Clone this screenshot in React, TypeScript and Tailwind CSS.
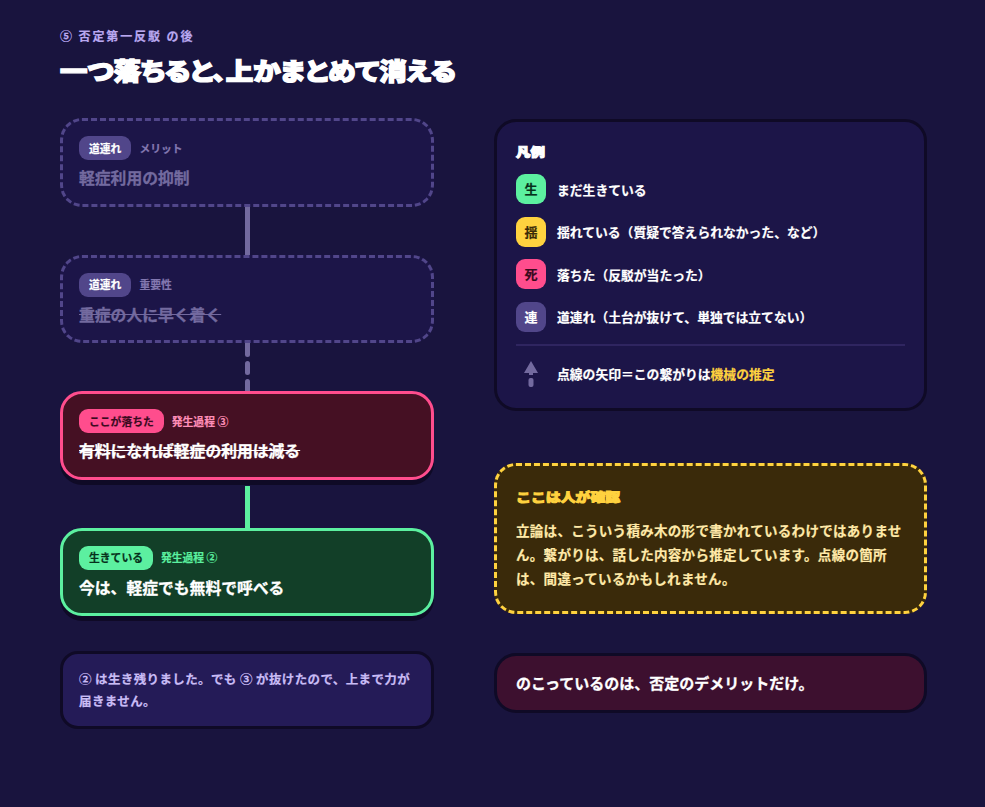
const font = "font-['Noto_Sans_CJK_JP','Noto_Sans',sans-serif]"

function Chip({ label, cls }: { label: string; cls: string }) {
  return (
    <span className={`inline-flex h-6 items-center rounded-[9px] px-[10px] text-[10.8px] font-bold [-webkit-text-stroke:0.2px] ${cls}`}>
      {label}
    </span>
  )
}

function Node({ box, chip, chipCls, sub, subCls, title, titleCls }: {
  box: string
  chip: string
  chipCls: string
  sub: string
  subCls: string
  title: string
  titleCls: string
}) {
  return (
    <div className={`h-[88.5px] rounded-[22px] px-4 pt-[15px] ${box}`}>
      <div className="flex items-center gap-2">
        <Chip label={chip} cls={chipCls} />
        <span className={`text-[10.8px] font-bold [-webkit-text-stroke:0.2px] ${subCls}`}>{sub}</span>
      </div>
      <div className={`mt-[6px] text-[15.8px] font-bold leading-[24px] [-webkit-text-stroke:0.3px] ${titleCls}`}>{title}</div>
    </div>
  )
}

function Link({ cls, dashed }: { cls: string; dashed?: boolean }) {
  if (dashed) {
    return (
      <div className="flex h-12 flex-col items-center justify-between">
        <div className="h-[14px] w-[5px] rounded-b-sm bg-[#736a9f]" />
        <div className="h-[14px] w-[5px] rounded-sm bg-[#736a9f]" />
        <div className="h-[12px] w-[5px] rounded-t-sm bg-[#736a9f]" />
      </div>
    )
  }
  return <div className={`mx-auto w-[5px] ${cls}`} />
}

function LegendRow({ mark, markCls, text }: { mark: string; markCls: string; text: string }) {
  return (
    <div className="flex items-center gap-[11px]">
      <span className={`flex h-[30px] w-[30px] items-center justify-center rounded-[9px] text-[13px] font-bold [-webkit-text-stroke:0.2px] ${markCls}`}>{mark}</span>
      <span className="pt-px text-[12.8px] font-bold text-white [-webkit-text-stroke:0.2px]">{text}</span>
    </div>
  )
}

export default function App() {
  return (
    <div className={`min-h-[807px] overflow-hidden bg-[#19143e] pl-[60px] pr-[58px] pt-[28px] ${font}`}>
      <div className="text-[12px] font-bold leading-4 tracking-[1.9px] text-[#b9a8f0] [-webkit-text-stroke:0.2px]">⑤ 否定第一反駁 の後</div>
      <h1 className="mt-[8px] w-max origin-left scale-x-[1.145] text-[24px] font-black leading-9 text-white [-webkit-text-stroke:1.4px_#fff] [font-feature-settings:'palt']">
        一つ落ちると、上かまとめて消える
      </h1>

      <div className="mt-[30px] grid grid-cols-[374px_433px] gap-x-[60px]">
        <div>
          <Node
            box="border-[3px] border-dashed border-[#51468a] bg-[#1c1548]"
            chip="道連れ"
            chipCls="bg-[#51468a] text-white"
            sub="メリット"
            subCls="text-[#8378b0]"
            title="軽症利用の抑制"
            titleCls="text-[#736a9f]"
          />
          <Link cls="h-12 bg-[#736a9f]" />
          <Node
            box="border-[3px] border-dashed border-[#51468a] bg-[#1c1548]"
            chip="道連れ"
            chipCls="bg-[#51468a] text-white"
            sub="重要性"
            subCls="text-[#8378b0]"
            title="重症の人に早く着く"
            titleCls="text-[#736a9f] line-through"
          />
          <Link cls="" dashed />
          <Node
            box="border-[3px] border-[#ff4d8d] bg-[#451023] shadow-[0_5px_0_#0f0a26]"
            chip="ここが落ちた"
            chipCls="bg-[#ff4d8d] text-[#3a0a1e]"
            sub="発生過程 ③"
            subCls="text-[#ff8fb8]"
            title="有料になれば軽症の利用は減る"
            titleCls="text-white line-through"
          />
          <Link cls="mt-[6px] h-[42px] bg-[#5cf0a0]" />
          <Node
            box="border-[3px] border-[#5cf0a0] bg-[#123f28] shadow-[0_5px_0_#0f0a26]"
            chip="生きている"
            chipCls="bg-[#5cf0a0] text-[#06301b]"
            sub="発生過程 ②"
            subCls="text-[#5cf0a0]"
            title="今は、軽症でも無料で呼べる"
            titleCls="text-white"
          />
          <div className="mt-[35px] rounded-[18px] border-[3px] border-[#0f0a26] bg-[#241b57] px-4 py-[14px] text-[12.5px] font-bold leading-[22px] tracking-[0.03em] text-[#c9bcf5] [-webkit-text-stroke:0.2px]">
            ② は生き残りました。でも ③ が抜けたので、上まで力が届きません。
          </div>
        </div>

        <div className="pt-px">
          <div className="rounded-[22px] border-[3px] border-[#0f0a26] bg-[#1c1548] px-[19px] pb-[19px] pt-[20px]">
            <div className="origin-left scale-x-[1.2] text-[12px] font-black leading-5 text-white [-webkit-text-stroke:1px_#fff]">凡例</div>
            <div className="mt-[12px] flex flex-col gap-[12.5px]">
              <LegendRow mark="生" markCls="bg-[#5cf0a0] text-[#06301b]" text="まだ生きている" />
              <LegendRow mark="揺" markCls="bg-[#ffd23f] text-[#3a2a08]" text="揺れている（質疑で答えられなかった、など）" />
              <LegendRow mark="死" markCls="bg-[#ff4d8d] text-[#3a0a1e]" text="落ちた（反駁が当たった）" />
              <LegendRow mark="連" markCls="bg-[#51468a] text-white" text="道連れ（土台が抜けて、単独では立てない）" />
            </div>
            <div className="mt-[12px] flex items-center gap-[11px] border-t-2 border-[#2f2560] pt-[13px]">
              <svg width="30" height="30" viewBox="0 0 30 30" className="shrink-0">
                <path d="M15 2 L22 14 H17 V16 H13 V14 H8 Z" fill="#736a9f" />
                <rect x="12.5" y="19" width="5" height="9" rx="2" fill="#736a9f" />
              </svg>
              <span className="text-[12.8px] font-bold text-white [-webkit-text-stroke:0.2px]">
                点線の矢印＝この繋がりは<span className="text-[#ffd23f]">機械の推定</span>
              </span>
            </div>
          </div>

          <div className="mt-[52px] rounded-[22px] border-[3px] border-dashed border-[#ffd23f] bg-[#3a2a0a] px-[19px] pb-[21px] pt-[21px]">
            <div className="origin-left scale-x-[1.19] text-[12.5px] font-black leading-5 text-[#ffd23f] [-webkit-text-stroke:1px_#ffd23f]">ここは人が確認</div>
            <p className="mt-[11px] text-[13.5px] font-bold leading-[24px] tracking-[0.3px] text-[#ffe9a8] [-webkit-text-stroke:0.2px]">
              立論は、こういう積み木の形で書かれているわけではありません。繋がりは、話した内容から推定しています。点線の箇所は、間違っているかもしれません。
            </p>
          </div>

          <div className="mt-[39px] rounded-[22px] border-[3px] border-[#0f0a26] bg-[#3d102f] px-[19px] py-[15px] text-[15px] font-bold leading-[24px] text-white [-webkit-text-stroke:0.3px]">
            のこっているのは、否定のデメリットだけ。
          </div>
        </div>
      </div>
    </div>
  )
}
